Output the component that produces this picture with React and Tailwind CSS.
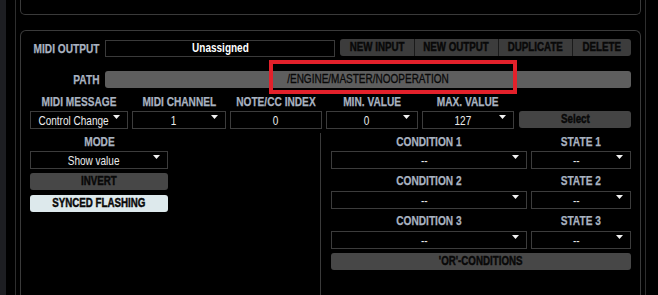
import React from 'react';

// Liberation Sans squeezed to match the narrow UI face
const T = ({ children, sx = 'scale-x-[0.78]', origin = 'origin-center' }) => (
  <span className={`inline-block whitespace-nowrap ${sx} ${origin}`}>{children}</span>
);

const Arrow = () => (
  <svg className="absolute right-[7px] top-[3px]" width="7" height="4" viewBox="0 0 7 4">
    <path d="M0 0 H7 L3.5 4 Z" fill="#f2f2f2" />
  </svg>
);

// dropdown / field box
const Field = ({ value, arrow = true, className = '' }) => (
  <div
    className={`relative h-[18px] border border-[#3c3c3c] bg-black flex items-center justify-center text-[13px] leading-none text-[#ececec] ${arrow ? 'pr-[10px]' : ''} ${className}`}
  >
    <T sx="scale-x-[0.77]">{value}</T>
    {arrow && <Arrow />}
  </div>
);

const Label = ({ children, className = '' }) => (
  <div className={`h-[16px] flex items-center justify-center text-[13px] font-bold leading-none text-[#a9b3c0] [-webkit-text-stroke:0.25px] ${className}`}>
    <T>{children}</T>
  </div>
);

const GrayButton = ({ children, className = '' }) => (
  <div
    className={`h-[17px] rounded-[3px] flex items-center justify-center text-[12.5px] font-bold leading-none text-[#080808] [-webkit-text-stroke:0.45px] ${className}`}
  >
    <T>{children}</T>
  </div>
);

const columns = [
  { label: 'MIDI MESSAGE', value: 'Control Change', w: 'w-[98px]' },
  { label: 'MIDI CHANNEL', value: '1', w: 'w-[94px]' },
  { label: 'NOTE/CC INDEX', value: '0', w: 'w-[92px]', arrow: false },
  { label: 'MIN. VALUE', value: '0', w: 'w-[92px]' },
  { label: 'MAX. VALUE', value: '127', w: 'w-[92px]' },
];

const conditions = [1, 2, 3];

export default function App() {
  return (
    <div className="w-[658px] h-[295px] bg-black overflow-hidden flex font-['Liberation_Sans',Arial,sans-serif]">
      {/* left chrome */}
      <div className="w-[6px] shrink-0 bg-[#1d1e22]" />
      <div className="ml-[9px] w-px shrink-0 bg-[#2e2e2e]" />

      <div className="ml-[4px] w-[621px] shrink-0 flex flex-col">
        {/* previous panel (cut off) */}
        <div className="h-[15px] shrink-0 border-x border-b border-[#3a3a3a] rounded-b-[5px]" />

        {/* MIDI output panel */}
        <div className="relative mt-[15px] flex-1 min-h-0 overflow-hidden border-x border-t border-[#3a3a3a] rounded-t-[6px] pt-[8px] px-[9px]">
          {/* row: midi output */}
          <div className="flex items-center h-[18px]">
            <div className="w-[75px] pr-[6px] flex justify-end text-[13px] font-bold leading-none text-[#a9b3c0] [-webkit-text-stroke:0.25px]">
              <T origin="origin-right">MIDI OUTPUT</T>
            </div>
            <div className="w-[230px] h-[17px] mt-[1px] border border-[#3a3a3a] flex items-center justify-center text-[12.5px] font-bold text-white leading-none">
              <T sx="scale-x-[0.8]">Unassigned</T>
            </div>
            <div className="ml-[5px] w-[291px] h-[17px] -mt-[1px] rounded-[3px] bg-[#3c3c3c] flex text-[12.5px] font-bold leading-none text-[#080808] [-webkit-text-stroke:0.45px]">
              <div className="w-[75px] flex items-center justify-center border-r border-[#1a1a1a]"><T>NEW INPUT</T></div>
              <div className="w-[84px] flex items-center justify-center border-r border-[#1a1a1a]"><T>NEW OUTPUT</T></div>
              <div className="w-[74px] flex items-center justify-center border-r border-[#1a1a1a]"><T>DUPLICATE</T></div>
              <div className="flex-1 flex items-center justify-center"><T>DELETE</T></div>
            </div>
          </div>

          {/* row: path */}
          <div className="flex items-center mt-[14px] h-[17px]">
            <div className="w-[75px] pr-[6px] flex justify-end text-[13px] font-bold leading-none text-[#a9b3c0] [-webkit-text-stroke:0.25px]">
              <T origin="origin-right">PATH</T>
            </div>
            <div className="flex-1 h-[17px] rounded-[3px] bg-[#5e5e5e] flex items-center justify-center text-[12.5px] leading-none text-[#080808] [-webkit-text-stroke:0.3px]">
              <T sx="scale-x-[0.8]">/ENGINE/MASTER/NOOPERATION</T>
            </div>
          </div>

          {/* row: midi message settings */}
          <div className="flex gap-[4px] mt-[5px]">
            {columns.map((c) => (
              <div key={c.label} className={`${c.w} flex flex-col`}>
                <Label>{c.label}</Label>
                <Field value={c.value} arrow={c.arrow !== false} className="mt-[2px]" />
              </div>
            ))}
            <div className="flex-1 ml-[1px] flex flex-col">
              <div className="h-[16px]" />
              <GrayButton className="mt-[2px] bg-[#444]">Select</GrayButton>
            </div>
          </div>

          {/* lower section */}
          <div className="flex mt-[4px]">
            <div className="w-[291px] h-[170px] border-r border-[#3a3a3a]">
              <div className="w-[138px] flex flex-col">
                <Label>MODE</Label>
                <Field value="Show value" className="mt-[2px]" />
                <GrayButton className="mt-[4px] bg-[#474747]">INVERT</GrayButton>
                <GrayButton className="mt-[5px] bg-[#dde9ec]">SYNCED FLASHING</GrayButton>
              </div>
            </div>

            <div className="ml-[10px] w-[300px] flex flex-col">
              {conditions.map((n, i) => (
                <div key={n} className={`flex gap-[4px] ${i > 0 ? 'mt-[3px]' : ''}`}>
                  <div className="w-[196px] flex flex-col">
                    <Label>CONDITION {n}</Label>
                    <Field value="--" className={i === 0 ? 'mt-[2px]' : 'mt-[3px]'} />
                  </div>
                  <div className="flex-1 flex flex-col">
                    <Label>STATE {n}</Label>
                    <Field value="--" className={i === 0 ? 'mt-[2px]' : 'mt-[3px]'} />
                  </div>
                </div>
              ))}
              <GrayButton className="mt-[4px] bg-[#474747]">'OR'-CONDITIONS</GrayButton>
            </div>
          </div>

          {/* red highlight annotation */}
          <div className="absolute left-[248px] top-[29px] w-[248px] h-[34px] border-4 border-[#e3212b]" />
        </div>
      </div>

      <div className="ml-[4px] w-px shrink-0 bg-[#2e2e2e]" />
    </div>
  );
}
